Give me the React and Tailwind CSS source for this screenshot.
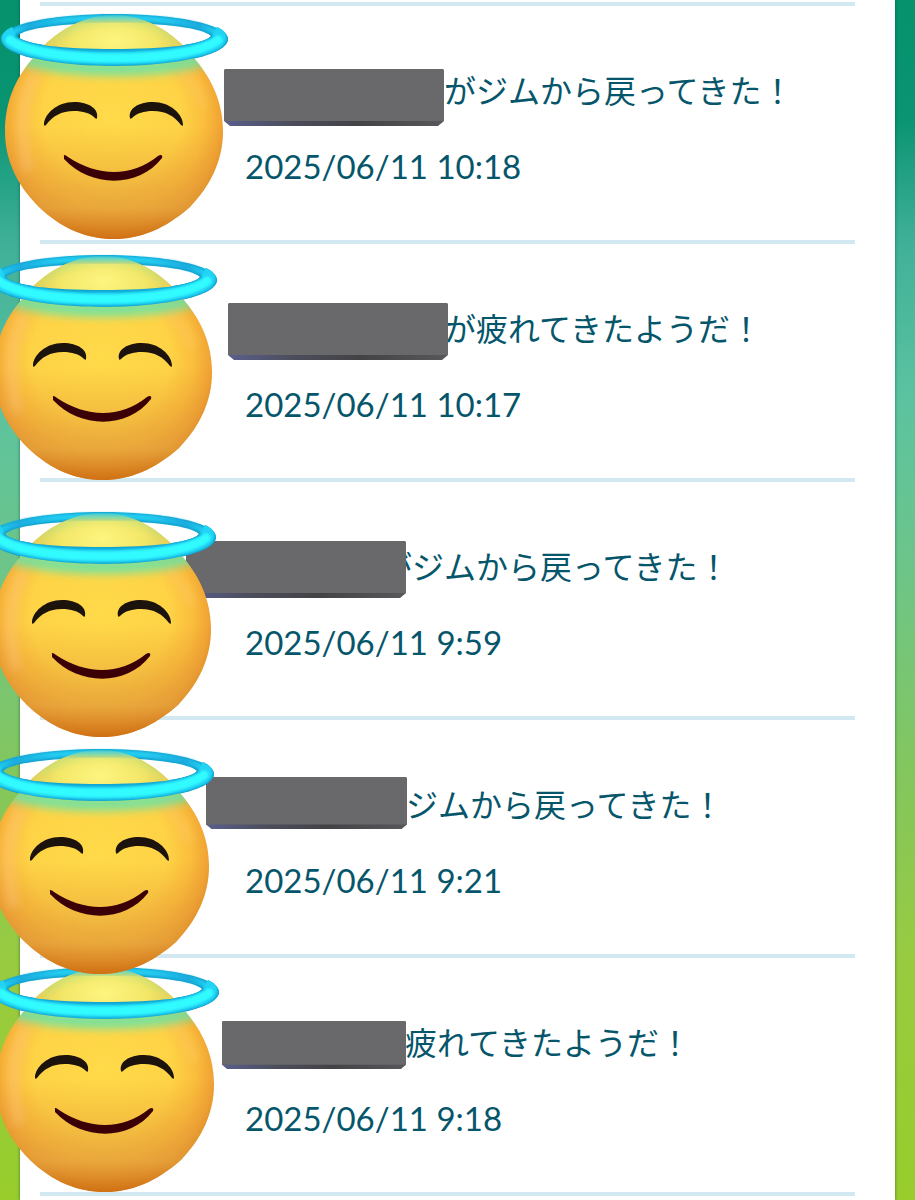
const EVENTS = [
  {
    id: 1,
    message: 'がジムから戻ってきた！',
    date: '2025/06/11 10:18',
    slot: 'w-[199px]',
    bar: 'left-[184px] top-[63px] w-[220px] h-[57px]',
    face: '-left-[40px] top-[6px]',
    layer: 'z-50',
  },
  {
    id: 2,
    message: 'が疲れてきたようだ！',
    date: '2025/06/11 10:17',
    slot: 'w-[199px]',
    bar: 'left-[188px] top-[59px] w-[220px] h-[57px]',
    face: '-left-[51px] top-[9px]',
    layer: 'z-40',
  },
  {
    id: 3,
    message: 'がジムから戻ってきた！',
    date: '2025/06/11 9:59',
    slot: 'w-[135px]',
    bar: 'left-[146px] top-[59px] w-[220px] h-[57px]',
    face: '-left-[52px] top-[28px]',
    layer: 'z-30',
  },
  {
    id: 4,
    message: 'ジムから戻ってきた！',
    date: '2025/06/11 9:21',
    slot: 'w-[161px]',
    bar: 'left-[166px] top-[57px] w-[201px] h-[52px]',
    face: '-left-[54px] top-[27px]',
    layer: 'z-20',
  },
  {
    id: 5,
    message: '疲れてきたようだ！',
    date: '2025/06/11 9:18',
    slot: 'w-[160px]',
    bar: 'left-[182px] top-[63px] w-[184px] h-[48px]',
    face: '-left-[49px] top-[7px]',
    layer: 'z-10',
  },
]

function HaloFace({ id, className }) {
  const ref = name => `url(#${name}-${id})`

  return (
    <svg viewBox="0 0 230 228" aria-hidden="true" className={`absolute w-[230px] max-w-none ${className}`}>
      <defs>
        <radialGradient id={`skin-${id}`} gradientUnits="userSpaceOnUse" cx="112" cy="104" r="126">
          <stop offset="0" stopColor="#ffda49" />
          <stop offset="0.55" stopColor="#fed346" />
          <stop offset="0.74" stopColor="#fabd3c" />
          <stop offset="0.87" stopColor="#f0a334" />
          <stop offset="1" stopColor="#d67a18" />
        </radialGradient>
        <linearGradient id={`shade-${id}`} x1="0" y1="0" x2="0" y2="1">
          <stop offset="0.5" stopColor="#e89a30" stopOpacity="0" />
          <stop offset="0.86" stopColor="#e29e3a" stopOpacity="0.7" />
          <stop offset="1" stopColor="#cc6a10" stopOpacity="0.8" />
        </linearGradient>
        <radialGradient id={`crown-${id}`} gradientUnits="userSpaceOnUse" cx="114" cy="28" r="70" gradientTransform="translate(0 13) scale(1 0.55)">
          <stop offset="0" stopColor="#fdf580" />
          <stop offset="0.6" stopColor="#f3e768" />
          <stop offset="1" stopColor="#e6cf58" />
        </radialGradient>
        <linearGradient id={`fade-${id}`} gradientUnits="userSpaceOnUse" x1="0" y1="2" x2="0" y2="12">
          <stop offset="0" stopColor="#fff" stopOpacity="0" />
          <stop offset="1" stopColor="#fff" />
        </linearGradient>
        <linearGradient id={`back-${id}`} gradientUnits="userSpaceOnUse" x1="0" y1="0" x2="228" y2="0">
          <stop offset="0" stopColor="#24e0f8" />
          <stop offset="0.06" stopColor="#20ccee" />
          <stop offset="0.13" stopColor="#1cacdf" />
          <stop offset="0.3" stopColor="#22ccf0" />
          <stop offset="0.7" stopColor="#22ccf0" />
          <stop offset="0.87" stopColor="#1cacdf" />
          <stop offset="0.94" stopColor="#20ccee" />
          <stop offset="1" stopColor="#24e0f8" />
        </linearGradient>
        <mask id={`top-${id}`} maskUnits="userSpaceOnUse" x="0" y="0" width="230" height="228">
          <rect width="230" height="228" fill={ref('fade')} />
        </mask>
        <clipPath id={`head-${id}`}>
          <path d="M114 3C145 3 174 20 193 45C212 66 223 91 223 119C223 148 211 173 190 195C165 217 140 227 114 227C87 227 62 217 39 195C17 173 5 148 5 119C5 91 15 66 34 45C53 20 83 3 114 3Z" />
        </clipPath>
        <clipPath id={`front-${id}`}>
          <path d="M1 27C1 43 55 54 114 54S228 43 228 27C228 23 224 18 217 15L211 24C203 33 166 37 114 37S25 33 17 24L12 15C5 18 1 23 1 27Z" />
        </clipPath>
        <filter id={`soft-${id}`} filterUnits="userSpaceOnUse" x="-20" y="-20" width="270" height="270">
          <feGaussianBlur stdDeviation="5" />
        </filter>
        <filter id={`fine-${id}`} filterUnits="userSpaceOnUse" x="-20" y="-20" width="270" height="270">
          <feGaussianBlur stdDeviation="1" />
        </filter>
      </defs>

      {/* back of the ring */}
      <path
        fillRule="evenodd"
        d="M1 27C1 12 55 2 114 2S228 12 228 27C228 43 178 54 114 54S1 43 1 27ZM17 24C25 33 66 37 114 37S203 33 211 24C203 16 165 11 114 11S25 16 17 24Z"
        fill="#129fcd"
      />
      <path d="M8 24C20 12 62 6 114 6S208 12 220 24" fill="none" stroke={ref('back')} strokeWidth="6" filter={ref('fine')} />

      <g mask={ref('top')}>
        <g clipPath={ref('head')}>
          <rect width="230" height="228" fill={ref('skin')} />
          <rect width="230" height="228" fill={ref('shade')} />
          <path d="M36 60Q14 100 28 160" fill="none" stroke="#ffc890" strokeWidth="10" opacity="0.4" filter={ref('soft')} />
          <path d="M176 56Q198 72 203 96" fill="none" stroke="#ffc860" strokeWidth="9" opacity="0.55" filter={ref('soft')} />
          <rect width="230" height="44" fill={ref('crown')} />
          <path d="M50 26Q80 6 114 5T178 26" fill="none" stroke="#86dc90" strokeWidth="5" opacity="0.6" filter={ref('soft')} />
          <path d="M10 42Q50 57 114 57T218 42" fill="none" stroke="#62e4ac" strokeWidth="13" opacity="0.9" filter={ref('soft')} />
        </g>
      </g>

      {/* front of the ring */}
      <g clipPath={ref('front')}>
        <rect width="230" height="60" fill="#0fa5d2" />
        <path d="M22 12C4 19 4 29 18 34C42 43 75 46 114 46S186 43 210 34C224 29 224 19 206 12" fill="none" stroke="#22d4f4" strokeWidth="13" filter={ref('fine')} />
        <path d="M10 28C26 40 66 46 114 46S202 40 218 28" fill="none" stroke="#30fbff" strokeWidth="9" strokeLinecap="round" filter={ref('fine')} />
      </g>

      {/* eyes and mouth */}
      <path d="M44 113C44 102 57 90 74 90C89 90 99 97 97 106C97 107 96 107 95 106C90 101 83 99 74 99C61 99 53 104 46 113C45 114 44 114 44 113Z" fill="#1c130c" />
      <path d="M183 113C183 102 170 90 153 90C138 90 128 97 130 106C130 107 131 107 132 106C137 101 144 99 153 99C166 99 174 104 181 113C182 114 183 114 183 113Z" fill="#1c130c" />
      <path d="M64 144C63 142 66 143 68 145C98 165 132 165 158 144C161 142 163 143 162 146C139 176 91 176 64 147Z" fill="#3b0006" />
    </svg>
  )
}

function NameBar({ id, className }) {
  return (
    <svg viewBox="0 0 220 57" preserveAspectRatio="none" aria-hidden="true" className={`absolute ${className}`}>
      <defs>
        <linearGradient id={`edge-${id}`}>
          <stop offset="0" stopColor="#5a5f8c" />
          <stop offset="0.3" stopColor="#4c4d5c" />
          <stop offset="0.6" stopColor="#434346" />
          <stop offset="1" stopColor="#58585c" />
        </linearGradient>
      </defs>
      <path d="M0 51H220V52L214 57H6L0 52Z" fill={`url(#edge-${id})`} />
      <path d="M0 1L1 0H219L220 1V52H0Z" fill="#69696b" />
    </svg>
  )
}

function EventRow({ event }) {
  return (
    <li className={`relative border-b-4 border-[#d2e9f2] pt-[59px] pb-[50px] pl-[205px] ${event.layer}`}>
      <p className="flex h-12 items-center whitespace-nowrap font-['Noto_Sans_CJK_JP',sans-serif] text-[32px] leading-[48px]">
        <span className={`shrink-0 ${event.slot}`} />
        {event.message}
      </p>
      <time className="mt-[29px] block font-[Lato,sans-serif] text-[33px] leading-[48px]">{event.date}</time>
      <NameBar id={event.id} className={event.bar} />
      <HaloFace id={event.id} className={event.face} />
    </li>
  )
}

export default function App() {
  return (
    <main className="min-h-screen overflow-hidden bg-[linear-gradient(180deg,#06926d_0px,#0a9472_120px,#3fb098_240px,#5cc3a0_400px,#6cc58a_560px,#82c660_760px,#98cb40_960px,#98cd2c_1200px)] px-5">
      <div className="min-h-screen bg-white pt-[2px] pr-10 pl-5 text-[#06566b] shadow-[0_0_3px_rgba(0,60,50,0.6)]">
        <ul className="border-t-4 border-[#d2e9f2]">
          {EVENTS.map(event => (
            <EventRow key={event.id} event={event} />
          ))}
        </ul>
      </div>
    </main>
  )
}
